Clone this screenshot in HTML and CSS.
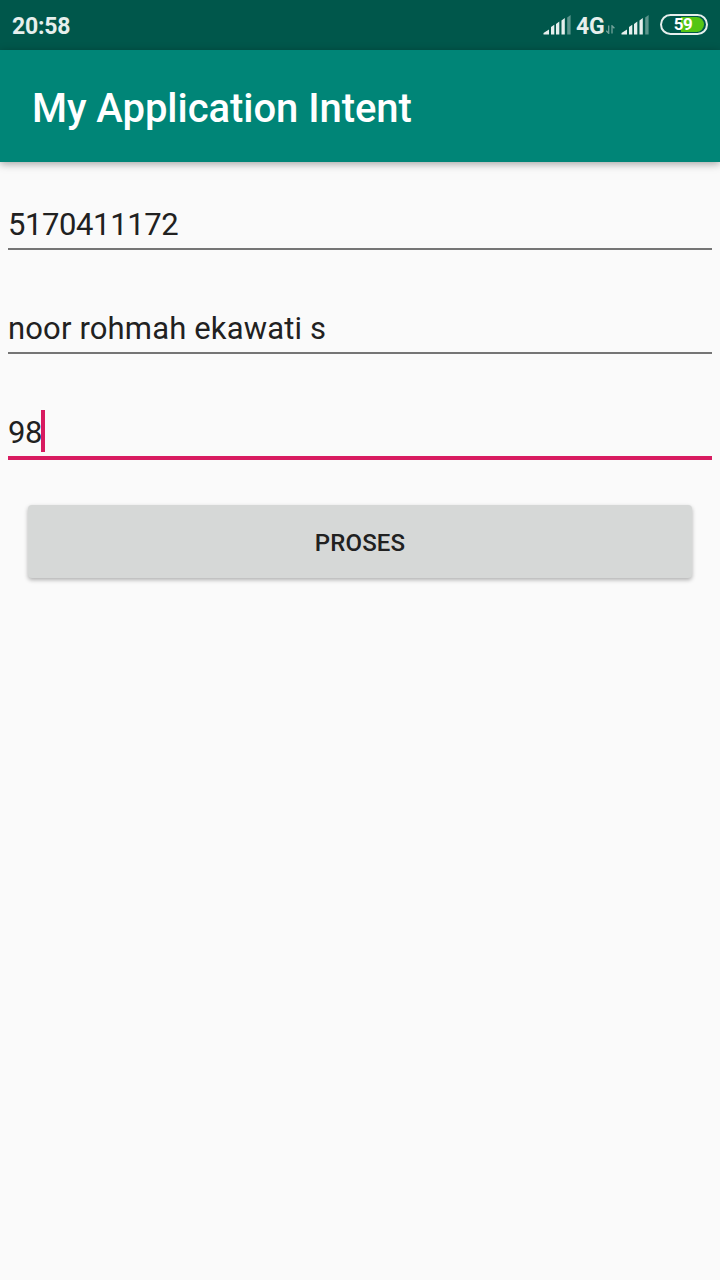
FILE: index.html
```html
<!DOCTYPE html>
<html lang="en">
<head>
<meta charset="utf-8">
<title>My Application Intent</title>
<link rel="stylesheet" href="styles.css">
</head>
<body>
<header class="status-bar">
  <span class="clock">20:58</span>
  <div class="status-icons">
    <svg class="signal" width="28" height="20" viewBox="0 0 28 20">
      <path d="M0.500 19.500v-1.500L6 14.500v5zM8 19.500v-7.500l3.300-2.300v9.800zM13 19.500V9l3.300-2.500v13zM18.500 19.500V5.500l3.300-2.500v16.500z"/>
      <path class="dim" d="M24.200 19.500V2.500L27.600 0v19.500z"/>
    </svg>
    <span class="network">4G</span>
    <svg class="arrows" width="9" height="9" viewBox="0 0 9 9">
      <path d="M2.7 0.5v7.8L0.3 5.8M6 8.5V0.8l2.4 2.5"/>
    </svg>
    <svg class="signal" width="28" height="20" viewBox="0 0 28 20">
      <path d="M0.500 19.500v-1.500L6 14.500v5zM8 19.500v-7.500l3.300-2.300v9.800zM13 19.500V9l3.300-2.500v13zM18.500 19.500V5.500l3.300-2.500v16.500z"/>
      <path class="dim" d="M24.200 19.500V2.500L27.600 0v19.500z"/>
    </svg>
    <div class="battery"><span class="battery-level">59</span></div>
  </div>
</header>
<div class="app-bar"><h1 class="title">My Application Intent</h1></div>
<main class="form">
  <div class="field"><span class="value digits">5170411172</span></div>
  <div class="field"><span class="value name">noor rohmah ekawati s</span></div>
  <div class="field focused"><span class="value digits">98</span><span class="cursor"></span></div>
  <button class="submit">PROSES</button>
</main>
</body>
</html>
```
FILE: styles.css
```css
* { box-sizing: border-box; }
body {
  margin: 0;
  height: 1280px;
  overflow: hidden;
  background: #fafafa;
  font-family: Roboto, sans-serif;
  color: #212121;
}
.status-bar {
  display: flex;
  justify-content: space-between;
  height: 50px;
  padding: 0 12px;
  background: #00574b;
  color: #e6efed;
}
.clock {
  padding-top: 2px;
  font-size: 23px;
  font-weight: 700;
  letter-spacing: -0.2px;
  line-height: 50px;
}
.status-icons {
  display: flex;
  align-items: flex-start;
}
.signal {
  margin-top: 15px;
  fill: #e6efed;
}
.signal .dim { fill: #5c958c; }
.network {
  width: 30px;
  margin-left: 5px;
  padding-top: 2px;
  font-size: 23px;
  font-weight: 700;
  letter-spacing: -0.3px;
  line-height: 50px;
}
.arrows {
  margin: 25px 6px 0 0;
  fill: none;
  stroke: #73a39b;
  stroke-width: 1.3;
}
.battery {
  display: flex;
  width: 48px;
  height: 21px;
  margin: 14px 0 0 11px;
  padding: 1px 2px;
  border: 2px solid #e6efed;
  border-radius: 10.5px;
}
.battery-level {
  flex: 1;
  padding-right: 2px;
  border-radius: 7.5px;
  background: linear-gradient(90deg, transparent 42%, #55c514 42%);
  color: #fff;
  font-size: 17px;
  font-weight: 700;
  letter-spacing: -0.5px;
  line-height: 15px;
  text-align: center;
}
.app-bar {
  height: 112px;
  padding: 3px 32px 0;
  background: #008577;
  box-shadow: 0 2px 8px rgba(0, 0, 0, 0.35);
}
.title {
  margin: 0;
  color: #fff;
  font-size: 40px;
  font-weight: 500;
  letter-spacing: -0.05px;
  line-height: 112px;
}
.form {
  display: flex;
  flex-direction: column;
  gap: 62px;
  padding: 41px 8px 0;
}
.field {
  display: flex;
  height: 47px;
  border-bottom: 2px solid #757575;
  font-size: 31px;
  line-height: 44px;
}
.field + .field { margin-top: -5px; }
.focused {
  height: 49px;
  border-bottom: 4px solid #d81b60;
}
.digits { letter-spacing: -0.4px; }
.name { letter-spacing: 0.15px; }
.cursor {
  width: 4px;
  height: 42px;
  margin: -1px 0 0 -1px;
  background: #d81b60;
}
.submit {
  height: 73px;
  margin: -17px 20px 0;
  padding: 2px 0 0;
  border: 0;
  border-radius: 4px;
  background: #d6d8d7;
  box-shadow: 0 2px 4px rgba(0, 0, 0, 0.3);
  color: #212121;
  font-family: inherit;
  font-size: 24px;
  font-weight: 500;
  letter-spacing: 0.15px;
}
```
